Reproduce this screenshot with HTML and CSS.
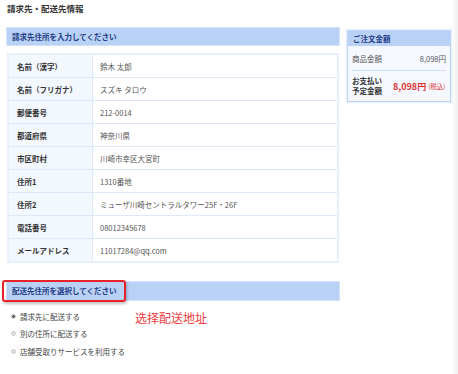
FILE: index.html
```html
<!DOCTYPE html>
<html lang="ja">
<head>
<meta charset="utf-8">
<link rel="stylesheet" href="styles.css">
</head>
<body>
<div class="page">
  <h1 class="title">請求先・配送先情報</h1>
  <div class="cols">
    <div class="main">
      <div class="bar">請求先住所を入力してください</div>
      <div class="table">
        <div class="row"><div class="lab">名前（漢字）</div><div class="val">鈴木 太郎</div></div>
        <div class="row"><div class="lab">名前（フリガナ）</div><div class="val">スズキ タロウ</div></div>
        <div class="row"><div class="lab">郵便番号</div><div class="val">212-0014</div></div>
        <div class="row"><div class="lab">都道府県</div><div class="val">神奈川県</div></div>
        <div class="row"><div class="lab">市区町村</div><div class="val">川崎市幸区大宮町</div></div>
        <div class="row"><div class="lab">住所1</div><div class="val">1310番地</div></div>
        <div class="row"><div class="lab">住所2</div><div class="val">ミューザ川崎セントラルタワー25F・26F</div></div>
        <div class="row"><div class="lab">電話番号</div><div class="val">08012345678</div></div>
        <div class="row"><div class="lab">メールアドレス</div><div class="val">11017284@qq.com</div></div>
      </div>
      <div class="bar bar2">配送先住所を選択してください<span class="mark"></span></div>
      <div class="opts">
        <div class="radios">
          <div class="opt"><span class="rd on"></span>請求先に配送する</div>
          <div class="opt"><span class="rd"></span>別の住所に配送する</div>
          <div class="opt"><span class="rd"></span>店舗受取りサービスを利用する</div>
        </div>
        <div class="note" lang="zh-CN">选择配送地址</div>
      </div>
    </div>
    <div class="side">
      <div class="box">
        <div class="boxhead">ご注文金額</div>
        <div class="boxbody">
          <div class="line"><span>商品金額</span><span>8,098円</span></div>
          <div class="pay"><span class="paylab">お支払い<br>予定金額</span><span class="amt">8,098円</span><span class="tax">(税込)</span></div>
        </div>
      </div>
    </div>
  </div>
</div>
</body>
</html>
```
FILE: styles.css
```css
html, body {
  margin: 0;
  padding: 0;
}
body {
  width: 458px;
  height: 374px;
  overflow: hidden;
  background: linear-gradient(to right, #fff 451px, #f0f0f0 458px);
  font-family: "Noto Sans CJK JP", "Noto Sans", sans-serif;
  font-size: 7.5px;
  color: #444;
}
.page {
  padding: 3px 0 0 7px;
}
.title {
  margin: 0;
  font-size: 8.5px;
  font-weight: bold;
  color: #333;
  line-height: 11px;
  height: 25px;
}
.cols {
  display: flex;
  gap: 8px;
}
.main {
  width: 332px;
}
.bar {
  background: #b9d1f5;
  color: #1f3d86;
  font-weight: bold;
  height: 17px;
  line-height: 17px;
  padding-left: 5px;
  box-shadow: 0 0 0 1px #d4e3f9;
}
.table {
  margin-top: 8px;
  border: 2px solid #e8f0fd;
}
.row {
  display: flex;
  height: 22px;
  align-items: stretch;
  border-top: 1px solid #dde8f8;
}
.row:first-child {
  border-top: none;
}
.lab {
  width: 75px;
  padding-left: 8px;
  background: #f3f7fe;
  border-right: 1px solid #dde8f8;
  font-weight: bold;
  color: #333;
  display: flex;
  align-items: center;
}
.val {
  flex: 1;
  padding-left: 7px;
  color: #555;
  display: flex;
  align-items: center;
}
.bar2 {
  position: relative;
  margin-top: 19px;
  height: 18px;
  line-height: 18px;
}
.mark {
  position: absolute;
  left: -5px;
  top: -2px;
  width: 120px;
  height: 18px;
  border: 2.5px solid #e8222a;
  border-radius: 3px;
  box-shadow: 1px 2px 3px rgba(0,0,0,0.25);
}
.opts {
  display: flex;
  padding-top: 11px;
}
.radios {
  display: flex;
  flex-direction: column;
  gap: 7.5px;
  width: 128px;
}
.opt {
  display: flex;
  align-items: center;
  height: 10px;
  color: #444;
}
.rd {
  width: 5px;
  height: 5px;
  border-radius: 50%;
  background: #e2e2e2;
  border: 0.5px solid #c8c8c8;
  margin: 0 4px 0 4px;
  box-sizing: border-box;
}
.rd.on {
  background: radial-gradient(circle, #555 0 1.3px, #e2e2e2 1.6px);
}
.note {
  font-family: "Noto Sans CJK SC", "Noto Sans", sans-serif;
  color: #f03a3a;
  font-size: 12px;
  line-height: 14px;
  margin-top: 0;
}
.side {
  width: 104px;
  padding-top: 2px;
}
.box {
  border: 1.5px solid #bcd3f5;
  background: #f5f9ff;
  box-shadow: 0 0 0 1.5px #eef3fb;
}
.boxhead {
  background: #b9d1f5;
  color: #1f3d86;
  font-weight: bold;
  height: 15px;
  line-height: 15px;
  padding-left: 5px;
}
.boxbody {
  padding: 0 4px 0 4px;
}
.line {
  display: flex;
  justify-content: space-between;
  height: 24px;
  align-items: center;
  border-bottom: 1px solid #d3e1f7;
  color: #555;
}
.pay {
  display: flex;
  align-items: center;
  height: 30px;
}
.paylab {
  font-weight: bold;
  color: #333;
  line-height: 10px;
  width: 38px;
}
.amt {
  color: #e03030;
  font-weight: bold;
  font-size: 9px;
  margin-left: 3px;
}
.tax {
  color: #e03030;
  font-size: 6.5px;
  margin-left: 2px;
}
```
